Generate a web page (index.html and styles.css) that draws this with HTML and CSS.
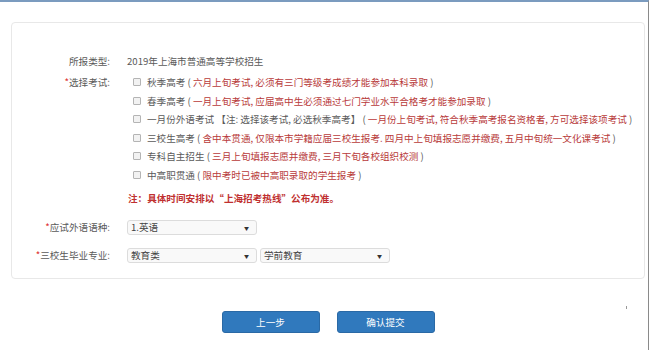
FILE: index.html
```html
<!DOCTYPE html>
<html lang="zh-CN">
<head>
<meta charset="utf-8">
<title>报名确认</title>
<link rel="stylesheet" href="styles.css">
</head>
<body>
<div class="page">
  <div class="card">
    <div class="row first">
      <div class="label">所报类型:</div>
      <div class="value">2019年上海市普通高等学校招生</div>
    </div>
    <div class="row exam-row">
      <div class="label"><span class="star">*</span>选择考试:</div>
      <div class="value">
        <ul class="exams">
          <li><span class="cb"></span>秋季高考 (<span class="red"> 六月上旬考试, 必须有三门等级考成绩才能参加本科录取 </span>)</li>
          <li><span class="cb"></span>春季高考 (<span class="red"> 一月上旬考试, 应届高中生必须通过七门学业水平合格考才能参加录取 </span>)</li>
          <li><span class="cb"></span>一月份外语考试 【注: 选择该考试, 必选秋季高考】 (<span class="red"> 一月份上旬考试, 符合秋季高考报名资格者, 方可选择该项考试 </span>)</li>
          <li><span class="cb"></span>三校生高考 (<span class="red"> 含中本贯通, 仅限本市学籍应届三校生报考. 四月中上旬填报志愿并缴费, 五月中旬统一文化课考试 </span>)</li>
          <li><span class="cb"></span>专科自主招生 (<span class="red"> 三月上旬填报志愿并缴费, 三月下旬各校组织校测 </span>)</li>
          <li><span class="cb"></span>中高职贯通 (<span class="red"> 限中考时已被中高职录取的学生报考 </span>)</li>
        </ul>
        <p class="note">注：具体时间安排以“上海招考热线”公布为准。</p>
      </div>
    </div>
    <div class="row sel-row">
      <div class="label"><span class="star">*</span>应试外语语种:</div>
      <div class="value selects">
        <div class="select">1.英语<span class="arrow">▼</span></div>
      </div>
    </div>
    <div class="row sel-row">
      <div class="label"><span class="star">*</span>三校生毕业专业:</div>
      <div class="value selects">
        <div class="select">教育类<span class="arrow">▼</span></div>
        <div class="select">学前教育<span class="arrow">▼</span></div>
      </div>
    </div>
  </div>
  <div class="actions">
    <button class="btn">上一步</button>
    <button class="btn">确认提交</button>
  </div>
  <span class="dot"></span>
</div>
</body>
</html>
```
FILE: styles.css
```css
html, body {
  margin: 0;
  padding: 0;
  background: #fff;
}
body {
  font-family: "Noto Sans CJK SC", "Liberation Sans", sans-serif;
  font-size: 9.6px;
  color: #5a5a5a;
}
.page {
  position: relative;
  width: 648px;
  height: 348px;
  border-top: 2px solid #7b9bbf;
  border-right: 1px solid #8a8a8a;
}
.card {
  margin: 20px 0 0 11px;
  width: 632px;
  height: 224px;
  padding-top: 31px;
  border: 1px solid #e8e8e8;
  border-radius: 4px;
}
.row {
  display: grid;
  grid-template-columns: 98px 1fr;
  column-gap: 17px;
  align-items: start;
  line-height: 14px;
}
.exam-row {
  margin-top: 7px;
}
.label {
  text-align: right;
  color: #5a5a5a;
  white-space: nowrap;
}
.star {
  color: #d33;
}
.value {
  color: #5a5a5a;
}
.exams {
  list-style: none;
  margin: 0;
  padding: 0 0 0 6px;
}
.exams li {
  height: 18.6px;
  display: flex;
  align-items: flex-start;
  white-space: pre;
}
.cb {
  width: 6px;
  height: 6px;
  border: 1px solid #b4b4b4;
  background: #f2f2f2;
  border-radius: 1px;
  margin: 3px 6px 0 0;
  flex: none;
}
.red {
  color: #b83a3a;
  white-space: pre;
}
.note {
  margin: 4px 0 0 1px;
  color: #c03030;
  font-weight: bold;
  line-height: 14px;
}
.sel-row {
  align-items: center;
  margin-top: 15px;
}
.sel-row + .sel-row {
  margin-top: 13px;
}
.selects {
  display: flex;
  gap: 3px;
}
.select {
  width: 130px;
  height: 15px;
  box-sizing: border-box;
  border: 1px solid #dcdcdc;
  border-radius: 3px;
  background: #f9f9f9;
  padding: 0 0 0 3px;
  line-height: 13px;
  color: #444;
  display: flex;
  justify-content: space-between;
}
.arrow {
  font-size: 5px;
  color: #333;
  padding-right: 7px;
  line-height: 13px;
}
.actions {
  display: flex;
  justify-content: center;
  gap: 17px;
  width: 656px;
  margin-top: 32px;
}
.btn {
  width: 98px;
  height: 22px;
  border: 1px solid #2a69a5;
  border-radius: 3px;
  background: #3079bd;
  color: #fff;
  font-family: "Noto Sans CJK SC", "Liberation Sans", sans-serif;
  font-size: 9.6px;
  padding: 0;
}
.dot {
  position: absolute;
  left: 626px;
  top: 304px;
  width: 1px;
  height: 3px;
  background: #999;
}
```
